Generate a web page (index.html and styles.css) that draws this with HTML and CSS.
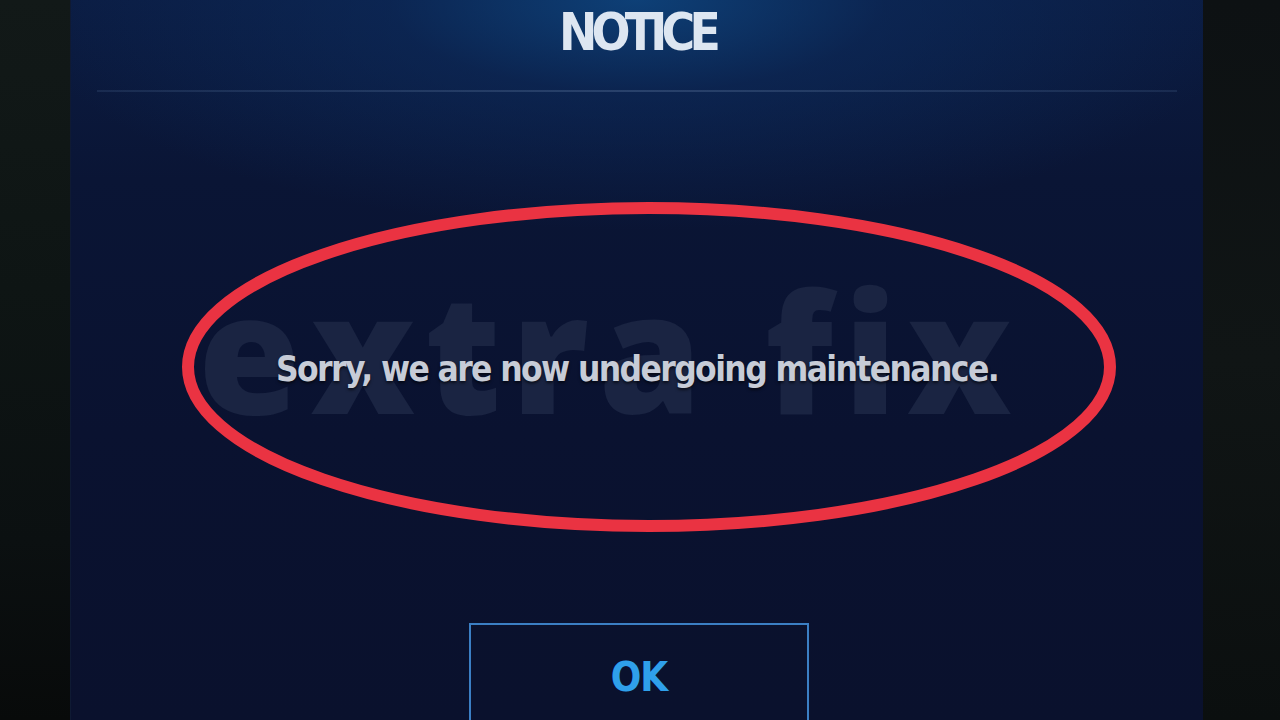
FILE: index.html
```html
<!DOCTYPE html>
<html>
<head>
<meta charset="utf-8">
<link rel="stylesheet" href="styles.css">
</head>
<body>
<div class="screen">
  <div class="side side-left"></div>
  <div class="panel">
    <div class="header">
      <h1 class="title">NOTICE</h1>
    </div>
    <div class="divider"></div>
    <div class="body">
      <div class="watermark">extra fix</div>
      <p class="message">Sorry, we are now undergoing maintenance.</p>
      <svg class="ring" width="960" height="360" viewBox="0 0 960 360">
        <ellipse cx="480" cy="180" rx="461" ry="159" fill="none" stroke="#ea3342" stroke-width="12"/>
      </svg>
    </div>
    <div class="footer">
      <button class="ok">OK</button>
    </div>
  </div>
  <div class="side side-right"></div>
</div>
</body>
</html>
```
FILE: styles.css
```css
html, body {
  margin: 0;
  padding: 0;
  width: 1280px;
  height: 720px;
  overflow: hidden;
  background: #0c1212;
}

.screen {
  display: flex;
  width: 1280px;
  height: 720px;
}

.side {
  height: 720px;
}

.side-left {
  width: 70px;
  background: linear-gradient(180deg, #121918 0%, #0e1514 40%, #0b1011 75%, #080a0a 100%);
}

.side-right {
  width: 77px;
  background: linear-gradient(180deg, #0d1113 0%, #101515 50%, #0b0f0f 100%);
}

.panel {
  width: 1133px;
  height: 720px;
  display: flex;
  flex-direction: column;
  align-items: center;
  overflow: hidden;
  background:
    radial-gradient(ellipse 620px 230px at 50% 0%, rgba(14, 70, 128, 0.85) 0%, rgba(12, 45, 95, 0.55) 40%, rgba(10, 24, 56, 0) 100%),
    linear-gradient(180deg, #0b1c42 0%, #0a1535 25%, #0a1230 60%, #0a112d 100%);
  border-left: 1px solid #0f1a33;
  box-sizing: border-box;
}

.header {
  flex-shrink: 0;
  height: 90px;
  display: flex;
  justify-content: center;
  align-items: flex-start;
}

.title {
  margin: 3px 0 0 0;
  font-family: "DejaVu Sans Condensed", "DejaVu Sans", sans-serif;
  font-weight: bold;
  font-stretch: condensed;
  font-size: 51px;
  line-height: 60px;
  color: #dde6f1;
  letter-spacing: -5.8px;
}

.divider {
  flex-shrink: 0;
  width: 1080px;
  height: 2px;
  background: linear-gradient(90deg, rgba(60, 85, 125, 0.3), rgba(70, 95, 135, 0.5) 50%, rgba(60, 85, 125, 0.3));
}

.body {
  flex-shrink: 0;
  position: relative;
  width: 100%;
  height: 531px;
  display: flex;
  justify-content: center;
  align-items: center;
}

.watermark {
  position: absolute;
  left: 127px;
  top: 158px;
  font-family: "Open Sans", sans-serif;
  font-weight: 800;
  font-size: 166px;
  line-height: 200px;
  color: #1a2442;
  letter-spacing: 9.8px;
  white-space: nowrap;
}

.message {
  position: relative;
  margin: 22px 0 0 0;
  font-family: "DejaVu Sans Condensed", "DejaVu Sans", sans-serif;
  font-weight: bold;
  font-stretch: condensed;
  font-size: 35px;
  color: #c7ccd7;
  letter-spacing: -1.6px;
  text-shadow: 0 2px 3px rgba(0, 0, 0, 0.6);
  z-index: 1;
}

.ring {
  position: absolute;
  left: 98px;
  top: 95px;
  z-index: 2;
}

.footer {
  flex: 1 1 auto;
  min-height: 0;
  display: flex;
  justify-content: center;
  align-items: flex-start;
}

.ok {
  flex-shrink: 0;
  margin-left: 4px;
  width: 340px;
  height: 120px;
  background: rgba(10, 18, 45, 0.6);
  border: 2px solid #3b7fc4;
  border-bottom: none;
  font-family: "DejaVu Sans Condensed", "DejaVu Sans", sans-serif;
  font-weight: bold;
  font-size: 40px;
  letter-spacing: -1px;
  color: #2fa0ea;
  padding: 0 0 43px 0;
  box-sizing: border-box;
  display: flex;
  justify-content: center;
  align-items: flex-end;
}
```
